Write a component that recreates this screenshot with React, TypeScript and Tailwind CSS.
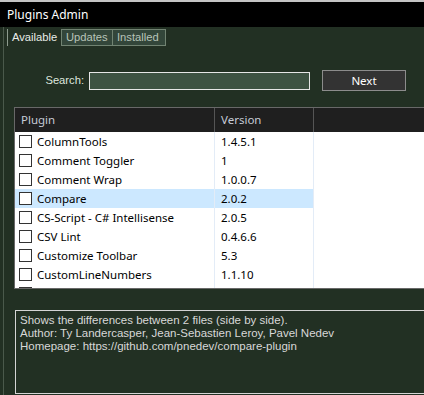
import React from "react";

const rows: [string, string][] = [
  ["ColumnTools", "1.4.5.1"],
  ["Comment Toggler", "1"],
  ["Comment Wrap", "1.0.0.7"],
  ["Compare", "2.0.2"],
  ["CS-Script - C# Intellisense", "2.0.5"],
  ["CSV Lint", "0.4.6.6"],
  ["Customize Toolbar", "5.3"],
  ["CustomLineNumbers", "1.1.10"],
  ["", ""],
];

const tahoma = { fontFamily: '"Liberation Sans", Arial, sans-serif' };

export default function App() {
  return (
    <div
      className="w-[424px] h-[395px] overflow-hidden bg-[#223023] flex flex-col"
      style={{ fontFamily: '"Noto Sans", "Open Sans", sans-serif' }}
    >
      <div className="h-[27px] shrink-0 bg-black border-t-2 border-[#c4c4c4] flex items-center pl-[7px] text-[12px] text-white">
        Plugins Admin
      </div>
      <div className="flex-1 ml-[3px] border-l border-[#4a594b] flex flex-col">
        {/* tabs */}
        <div className="mt-[2px] h-[17px] pl-[3px] flex text-[11.2px] leading-[15px]" style={tahoma}>
          <div className="w-[54px] border-l border-[#8d9b8e] pl-[4px] text-[#e8ece8] flex items-center whitespace-nowrap">
            Available
          </div>
          <div className="w-[52px] border border-[#718372] bg-[#33463a] text-[#b8c4b9] pl-[4px] flex items-center whitespace-nowrap">
            Updates
          </div>
          <div className="w-[53px] border border-l-0 border-[#718372] bg-[#33463a] text-[#b8c4b9] pl-[4px] flex items-center whitespace-nowrap">
            Installed
          </div>
        </div>
        {/* search */}
        <div className="mt-[24px] h-[21px] flex items-center">
          <div className="w-[81px] text-right text-[11.2px] text-[#dfe6df] pr-[1px]" style={tahoma}>Search:</div>
          <div className="ml-[4px] w-[221px] h-[18px] border border-[#e6e6e6] bg-[#3d5242]" />
          <div className="ml-[12px] w-[84px] h-[21px] border border-[#8c8c8c] bg-[#333333] text-white text-[11.5px] flex items-center justify-center">
            Next
          </div>
        </div>
        {/* list */}
        <div className="mt-[16px] ml-[10px] w-[420px] h-[182px] shrink-0 border-t border-l border-b border-[#686868] bg-white overflow-hidden text-[11.5px]">
          <div className="h-[24px] bg-[#1f1f1f] flex text-[#c6cbd6]">
            <div className="w-[200px] border-r border-[#555] pl-[6px] flex items-center">Plugin</div>
            <div className="w-[99px] border-r border-[#555] pl-[6px] flex items-center">Version</div>
            <div className="flex-1" />
          </div>
          {rows.map(([name, ver], i) => (
            <div key={i} className="h-[19px] flex">
              <div className={`w-[299px] flex ${name === "Compare" ? "bg-[#cce8ff]" : ""}`}>
                <div className="w-[200px] border-r border-[#e3ecf7] flex items-center pl-[4px] text-black">
                  <div className="w-[13px] h-[13px] border border-[#333] bg-white shrink-0" />
                  <span className="ml-[5px] whitespace-nowrap">{name}</span>
                </div>
                <div className="w-[99px] border-r border-[#e3ecf7] flex items-center pl-[6px] text-black">{ver}</div>
              </div>
            </div>
          ))}
        </div>
        {/* description */}
        <div
          className="mt-[21px] ml-[11px] w-[420px] h-[84px] shrink-0 border border-r-0 border-[#d4d4d4] pt-[3px] pl-[4px] text-[11.5px] leading-[13px] text-[#d8d8d8]"
          style={tahoma}
        >
          <div>Shows the differences between 2 files (side by side).</div>
          <div>Author: Ty Landercasper, Jean-Sebastien Leroy, Pavel Nedev</div>
          <div>Homepage: https://github.com/pnedev/compare-plugin</div>
        </div>
      </div>
    </div>
  );
}
